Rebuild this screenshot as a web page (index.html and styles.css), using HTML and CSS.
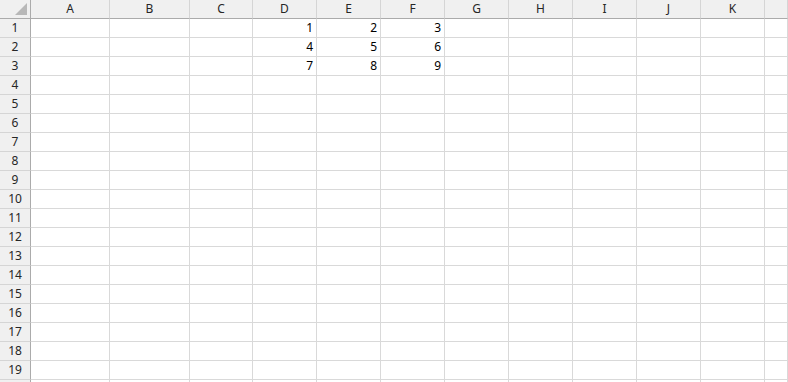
FILE: index.html
```html
<!DOCTYPE html>
<html>
<head>
<meta charset="utf-8">
<link rel="stylesheet" href="styles.css">
</head>
<body>
<div class="sheet" id="sheet">
  <div class="corner"><span class="tri"></span></div>
  <div class="ch">A</div><div class="ch">B</div><div class="ch">C</div><div class="ch">D</div><div class="ch">E</div><div class="ch">F</div><div class="ch">G</div><div class="ch">H</div><div class="ch">I</div><div class="ch">J</div><div class="ch">K</div><div class="ch"></div>
</div>
<script src="script.js"></script>
</body>
</html>
```
FILE: script.js
```js
var sheet = document.getElementById('sheet');
var data = {1:[1,2,3],2:[4,5,6],3:[7,8,9]};
for (var r = 1; r <= 20; r++) {
  var h = document.createElement('div');
  h.className = 'rh';
  if (r <= 19) h.textContent = r;
  sheet.appendChild(h);
  for (var c = 0; c < 12; c++) {
    var d = document.createElement('div');
    d.className = 'cell';
    if (data[r] && c >= 3 && c <= 5) d.textContent = data[r][c - 3];
    sheet.appendChild(d);
  }
}
```
FILE: styles.css
```css
html, body {
  margin: 0;
  padding: 0;
  background: #ffffff;
  overflow: hidden;
}
.sheet {
  display: grid;
  grid-template-columns: 31px 79px 80px 63px repeat(8, 64px) 1fr;
  grid-auto-rows: 19px;
  width: 788px;
  height: 382px;
  overflow: hidden;
  font-family: "Noto Sans", "Open Sans", sans-serif;
  font-size: 12px;
  color: #000;
}
.corner {
  position: relative;
  background: #f0f0f0;
  border-right: 1px solid #ababab;
  border-bottom: 1px solid #ababab;
  box-sizing: border-box;
}
.tri {
  position: absolute;
  right: 3px;
  bottom: 3px;
  width: 0;
  height: 0;
  border-left: 12px solid transparent;
  border-bottom: 12px solid #b8b8b8;
}
.ch {
  background: #f0f0f0;
  border-right: 1px solid #d5d5d5;
  border-bottom: 1px solid #ababab;
  box-sizing: border-box;
  color: #262626;
  text-align: center;
  line-height: 18px;
}
.rh {
  background: #f0f0f0;
  border-right: 1px solid #ababab;
  border-bottom: 1px solid #d5d5d5;
  box-sizing: border-box;
  color: #262626;
  text-align: center;
  line-height: 18px;
}
.cell {
  border-right: 1px solid #d9d9d9;
  border-bottom: 1px solid #d9d9d9;
  box-sizing: border-box;
  text-align: right;
  padding-right: 3px;
  line-height: 18px;
  background: #ffffff;
}
```
